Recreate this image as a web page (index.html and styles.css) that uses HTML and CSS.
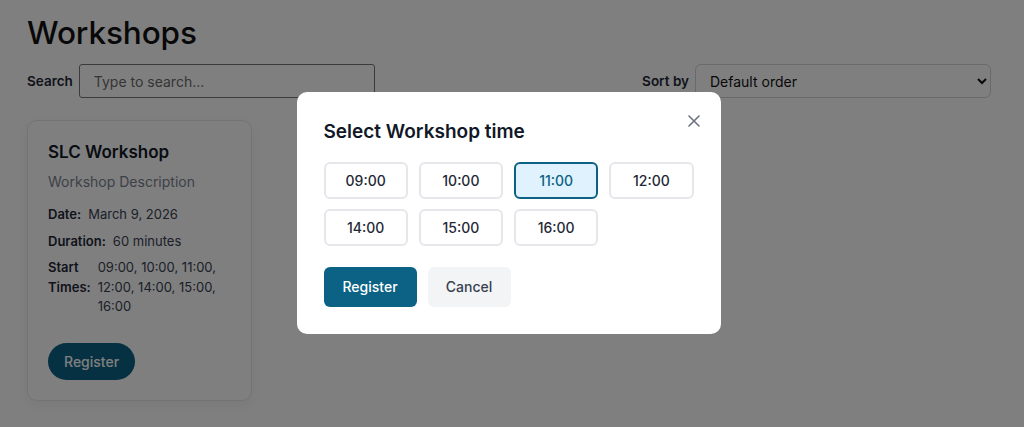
FILE: index.html
```html
<!DOCTYPE html>
<html lang="en">
<head>
<meta charset="utf-8">
<title>Workshops</title>
<link rel="stylesheet" href="styles.css">
</head>
<body>
<div class="page">
  <h1 class="page-title">Workshops</h1>
  <div class="toolbar">
    <label class="field">
      <span class="field-label">Search</span>
      <input class="search-input" type="text" placeholder="Type to search...">
    </label>
    <label class="field">
      <span class="field-label">Sort by</span>
      <select class="sort-select">
        <option>Default order</option>
      </select>
    </label>
  </div>
  <div class="cards">
    <div class="card">
      <h2 class="card-title">SLC Workshop</h2>
      <p class="card-desc">Workshop Description</p>
      <div class="meta-row"><span class="meta-label">Date:</span><span class="meta-value">March 9, 2026</span></div>
      <div class="meta-row"><span class="meta-label">Duration:</span><span class="meta-value">60 minutes</span></div>
      <div class="meta-row"><span class="meta-label">Start Times:</span><span class="meta-value">09:00, 10:00, 11:00, 12:00, 14:00, 15:00, 16:00</span></div>
      <button class="pill-btn">Register</button>
    </div>
  </div>
</div>

<div class="overlay">
  <div class="modal">
    <div class="modal-head">
      <h3 class="modal-title">Select Workshop time</h3>
      <button class="close-btn" aria-label="Close">
        <svg width="12" height="12" viewBox="0 0 12 12"><path d="M1 1L11 11M11 1L1 11" stroke="#6b7280" stroke-width="1.6" stroke-linecap="round" fill="none"/></svg>
      </button>
    </div>
    <div class="times">
      <button class="time-btn">09:00</button>
      <button class="time-btn">10:00</button>
      <button class="time-btn selected">11:00</button>
      <button class="time-btn">12:00</button>
      <button class="time-btn">14:00</button>
      <button class="time-btn">15:00</button>
      <button class="time-btn">16:00</button>
    </div>
    <div class="actions">
      <button class="btn-primary">Register</button>
      <button class="btn-secondary">Cancel</button>
    </div>
  </div>
</div>
</body>
</html>
```

FILE: styles.css
```css
* { box-sizing: border-box; }

html, body {
  margin: 0;
  padding: 0;
  background: #ffffff;
  font-family: Inter, "Noto Sans", Arial, sans-serif;
  color: #1f2937;
  height: 100%;
  overflow: hidden;
}

.page {
  padding: 14px 33px 0 27px;
}

.page-title {
  margin: 0;
  font-size: 31.5px;
  font-weight: 500;
  letter-spacing: -0.1px;
  color: #111111;
  line-height: 38px;
}

.toolbar {
  margin-top: 12px;
  display: flex;
  justify-content: space-between;
  align-items: center;
}

.field {
  display: flex;
  align-items: center;
  gap: 6px;
}

.field-label {
  font-size: 13.5px;
  font-weight: 600;
  color: #1f2937;
}

.search-input {
  width: 296px;
  height: 34px;
  border: 1px solid #767676;
  border-radius: 3px;
  padding: 0 14px;
  font-family: inherit;
  font-size: 14px;
  color: #111;
  background: #fff;
}

.search-input::placeholder { color: #6b6b6b; }

.sort-select {
  width: 296px;
  height: 34px;
  border: 1px solid #d1d5db;
  border-radius: 6px;
  padding: 0 10px;
  font-family: inherit;
  font-size: 14px;
  color: #111;
  background: #fff;
}

.cards {
  margin-top: 22px;
  display: flex;
}

.card {
  width: 225px;
  height: 281px;
  border: 1px solid #e5e7eb;
  border-radius: 10px;
  padding: 21px 20px;
  background: #fff;
  box-shadow: 0 4px 14px rgba(0,0,0,0.06);
}

.card-title {
  margin: 0;
  font-size: 17px;
  font-weight: 600;
  color: #111827;
  line-height: 20px;
}

.card-desc {
  margin: 10px 0 13px;
  font-size: 14px;
  color: #7b8290;
  line-height: 20px;
}

.meta-row {
  display: flex;
  gap: 7px;
  font-size: 13px;
  line-height: 19.5px;
  margin-bottom: 7px;
  color: #374151;
}

.meta-label {
  font-weight: 600;
  color: #1f2937;
}

.pill-btn {
  margin-top: 19px;
  height: 37px;
  padding: 0 16px;
  border: none;
  border-radius: 999px;
  background: #0b6285;
  color: #fff;
  font-family: inherit;
  font-size: 14px;
  font-weight: 500;
}

.overlay {
  position: fixed;
  inset: 0;
  background: rgba(0,0,0,0.5);
  display: flex;
  align-items: center;
  justify-content: center;
  padding-right: 7px;
  padding-bottom: 2px;
}

.modal {
  width: 424px;
  background: #fff;
  border-radius: 10px;
  padding: 24px 27px 27px 27px;
}

.modal-head {
  display: flex;
  justify-content: space-between;
  align-items: flex-start;
}

.modal-title {
  margin: 4px 0 0;
  font-size: 19px;
  font-weight: 600;
  color: #111827;
  line-height: 24px;
}

.close-btn {
  border: none;
  background: none;
  padding: 0;
  margin-top: -1px;
  margin-right: -6px;
  width: 12px;
  height: 12px;
  display: flex;
}

.times {
  margin-top: 18px;
  display: grid;
  grid-template-columns: repeat(4, 1fr);
  column-gap: 11px;
  row-gap: 10px;
}

.time-btn {
  height: 37px;
  border: 2px solid #e5e7eb;
  border-radius: 6px;
  background: #fff;
  font-family: inherit;
  font-size: 14px;
  font-weight: 500;
  color: #1f2937;
}

.time-btn.selected {
  border-color: #0b6285;
  background: #e0f2fe;
  color: #0b6285;
}

.actions {
  margin-top: 21px;
  display: flex;
  gap: 11px;
}

.btn-primary {
  width: 93px;
  height: 40px;
  border: none;
  border-radius: 6px;
  background: #0b6285;
  color: #fff;
  font-family: inherit;
  font-size: 14px;
  font-weight: 500;
}

.btn-secondary {
  width: 83px;
  height: 40px;
  border: none;
  border-radius: 6px;
  background: #f3f4f6;
  color: #374151;
  font-family: inherit;
  font-size: 14px;
  font-weight: 500;
}
```
